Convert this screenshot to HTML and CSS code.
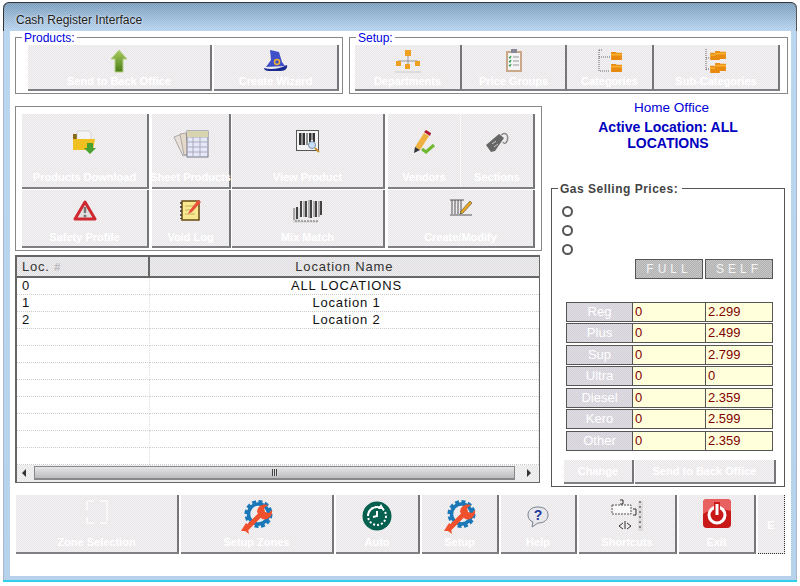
FILE: index.html
```html
<!DOCTYPE html>
<html lang="en">
<head>
    <meta charset="UTF-8">
    <meta name="viewport" content="width=device-width, initial-scale=1.0">
    <title>Cash Register Interface</title>
    <link rel="stylesheet" href="styles.css">
</head>
<body>
    <svg class="defs" width="0" height="0">
        <defs>
            <linearGradient id="arrow-fill" x1="0" y1="0" x2="0" y2="1">
                <stop offset="0" stop-color="#a8cc60"/>
                <stop offset="1" stop-color="#4a7c14"/>
            </linearGradient>
        </defs>
        <symbol id="wrench" viewBox="0 0 32 36">
            <circle cx="17.500" cy="15" r="12.500" fill="none" stroke="#1a78b8" stroke-width="3" stroke-dasharray="4 2.500"/>
            <circle cx="17.500" cy="15" r="10" fill="none" stroke="#1a78b8" stroke-width="3.500"/>
            <path fill="none" stroke="#f0502c" stroke-width="5" d="M5 30L20 15"/>
            <path fill="#f0502c" d="M16 13c0-5 5-9 11-7l-4 3 1 4 4 1 3-3c1 6-4 11-10 9z"/>
            <path fill="#f0502c" d="M0 32l5-8 4 4-2 2 1 5-4-3z"/>
        </symbol>
        <symbol id="folder" viewBox="0 0 12 10">
            <path fill="#e88a10" d="M0 1h5l1 1h6v8H0z"/>
            <path fill="#f8b030" d="M0 3h12v2H0z"/>
        </symbol>
    </svg>

    <div class="window">
        <div class="title">Cash Register Interface</div>
        <div class="client">

            <div class="top-row">
                <div class="group products">
                    <span class="legend">Products:</span>
                    <div class="btn-row products-row">
                        <div class="btn">
                            <svg width="18" height="24" viewBox="0 0 18 24"><path fill="url(#arrow-fill)" stroke="#b4d088" d="M9 1l8 9h-4v13H5V10H1z"/></svg>
                            <span class="label">Send to Back Office</span>
                        </div>
                        <div class="btn">
                            <svg width="24" height="24" viewBox="0 0 24 24"><path fill="#3f4fc8" d="M6 1l9 2 3 10 3 4-19 1 5-7z"/><path fill="#1a2a90" d="M0 19c7 2 15 1 23-3 1 3-2 6-6 6H5c-3 0-5-1-5-3z"/><circle cx="13" cy="13" r="2.500" fill="none" stroke="#f0b030" stroke-width="1.500"/></svg>
                            <span class="label">Create Wizard</span>
                        </div>
                    </div>
                </div>
                <div class="group setup">
                    <span class="legend">Setup:</span>
                    <div class="btn-row setup-row">
                        <div class="btn">
                            <svg width="26" height="24" viewBox="0 0 26 24"><path fill="none" stroke="#999" d="M13 6v6M3 16v-4h20v4M13 12v4"/><g fill="#f0a020"><rect x="10" y="1" width="6" height="6"/><rect x="1" y="12" width="5" height="5"/><rect x="10" y="15" width="5" height="5"/><rect x="20" y="12" width="5" height="5"/></g><path stroke="#ccc" d="M0 23h26"/></svg>
                            <span class="label">Departments</span>
                        </div>
                        <div class="btn">
                            <svg width="18" height="24" viewBox="0 0 18 24"><rect x="1" y="2" width="16" height="21" fill="#c8a888"/><rect x="3" y="4" width="12" height="17" fill="#f4f4f4"/><rect x="6" y="0" width="6" height="4" fill="#889"/><path fill="none" stroke="#30a050" stroke-width="1.200" d="M4 8l1 1 1-2M4 12l1 1 1-2M4 16l1 1 1-2"/><path stroke="#999" d="M8 8h6M8 12h6M8 16h6"/></svg>
                            <span class="label">Price Groups</span>
                        </div>
                        <div class="btn">
                            <svg width="24" height="24" viewBox="0 0 24 24"><path fill="none" stroke="#666" stroke-dasharray="1 1" d="M1 1v21h11M1 8h12M1 1h4"/><use href="#folder" x="13" y="2" width="11" height="9"/><use href="#folder" x="13" y="14" width="11" height="9"/></svg>
                            <span class="label">Categories</span>
                        </div>
                        <div class="btn">
                            <svg width="22" height="24" viewBox="0 0 22 24"><path fill="none" stroke="#666" stroke-dasharray="1 1" d="M1 0v22M1 9h4M1 20h4"/><use href="#folder" x="5" y="3" width="10" height="8"/><use href="#folder" x="10" y="1" width="11" height="9"/><use href="#folder" x="5" y="16" width="10" height="8"/><use href="#folder" x="10" y="13" width="11" height="9"/></svg>
                            <span class="label">Sub-Categories</span>
                        </div>
                    </div>
                </div>
            </div>

            <div class="main">
                <div class="left">
                    <div class="group actions">
                        <div class="btn tall mr3">
                            <svg width="24" height="24" viewBox="0 0 24 24"><path fill="#8a6a18" d="M0 4h6l2-2h8v18H0z"/><path fill="#f4f4f4" stroke="#bbb" stroke-width="0.500" d="M4 1h12l2 2v7H4z"/><path fill="#f0c020" d="M0 9h22l-2 11H0z"/><path fill="#48a030" d="M14 13h6v5h3l-6 6-6-6h3z"/></svg>
                            <span class="label">Products Download</span>
                        </div>
                        <div class="btn tall mr1">
                            <svg width="36" height="28" viewBox="0 0 36 28"><path fill="#e8e0d8" stroke="#aaa" d="M1 7l8-3 7 20-6 2z"/><path fill="#e4d8c8" stroke="#aaa" d="M7 4l6-1 3 21-5 1z"/><rect x="14" y="1" width="21" height="26" fill="#e4e8f8" stroke="#778"/><path stroke="#aab" d="M14 7h21M14 12h21M14 17h21M14 22h21M20 1v26M27 1v26"/><path fill="#d8d4b0" d="M14 1h21v6H14z"/></svg>
                            <span class="label">Sheet Products</span>
                        </div>
                        <div class="btn tall mr3">
                            <svg width="24" height="24" viewBox="0 0 24 24"><rect x="0.500" y="0.500" width="22" height="20" fill="#f4f4f4" stroke="#555"/><path stroke="#333" stroke-width="2" d="M4 3v12M8 3v12M14 3v9M18 3v9"/><path stroke="#333" d="M6 3v12M11 3v12M16 3v7"/><circle cx="16" cy="15" r="3.500" fill="#c8e0f8" stroke="#8090a8"/><path stroke="#c89030" stroke-width="2" d="M19 18l4 4"/></svg>
                            <span class="label">View Product</span>
                        </div>
                        <div class="btn pair">
                            <div class="btn tall half">
                                <svg width="24" height="26" viewBox="0 0 24 26"><path fill="#f0b040" d="M12 3l5 3-9 14-5-3z"/><path fill="#b01830" d="M12 2l2-2 5 3-1 3z"/><path fill="#333" d="M2 23l1-6 5 3z"/><path fill="none" stroke="#70b830" stroke-width="3" d="M10 19l4 3 8-7"/></svg>
                                <span class="label">Vendors</span>
                            </div>
                            <div class="btn tall half">
                                <svg width="24" height="24" viewBox="0 0 24 24"><path fill="#666" d="M1 15L14 4l5 4-9 13-4 1z"/><path fill="none" stroke="#888" stroke-width="1.500" d="M16 5c5-4 8 1 6 6-1 3-3 3-4 1"/><path stroke="#ccc" d="M7 14l4-3M9 17l4-3"/></svg>
                                <span class="label">Sections</span>
                            </div>
                        </div>
                        <div class="btn short mr3">
                            <svg width="24" height="22" viewBox="0 0 24 22"><path fill="#e0e0e0" stroke="#d02830" stroke-width="3" stroke-linejoin="round" d="M12 3l10 17H2z"/><path stroke="#777" stroke-width="2.500" d="M12 8v6"/><circle cx="12" cy="17" r="1.500" fill="#777"/></svg>
                            <span class="label">Safety Profile</span>
                        </div>
                        <div class="btn short mr1">
                            <svg width="22" height="22" viewBox="0 0 22 22"><rect x="2" y="2" width="17" height="19" fill="#f8e890" stroke="#6a4a10" stroke-width="1.500"/><path stroke="#333" stroke-width="1.500" stroke-dasharray="2 2" d="M1 3v17"/><path stroke="#c8b060" d="M5 7h10M5 11h8M5 15h10"/><path fill="#e8503c" d="M18 1l3 2-9 10-4 2 2-4z"/></svg>
                            <span class="label">Void Log</span>
                        </div>
                        <div class="btn short mr3">
                            <svg width="32" height="24" viewBox="0 0 32 24"><path fill="#ddd" d="M1 9h7v13h18v2H1z"/><path stroke="#444" stroke-width="2" d="M5 8v12M9 2v16M14 2v16M19 1v18M24 2v16M29 2v14"/><path stroke="#777" d="M2 9v12M12 2v16M17 1v18M22 2v16M27 2v16"/><path stroke="#666" stroke-dasharray="2 1" d="M3 22h24"/></svg>
                            <span class="label">Mix Match</span>
                        </div>
                        <div class="btn short">
                            <svg width="22" height="18" viewBox="0 0 22 18"><path stroke="#555" d="M0 1h14M2 1v14M5 1v14M8 1v14M11 1v14M0 16h22"/><path fill="#e8a820" stroke="#333" stroke-width="0.500" d="M20 2l2 2-9 10-3 1 1-3z"/></svg>
                            <span class="label">Create/Modify</span>
                        </div>
                    </div>

                    <div class="grid-box">
                        <table class="loc-table">
                            <thead>
                                <tr><th class="col-id">Loc. <span class="hash">#</span></th><th>Location Name</th></tr>
                            </thead>
                            <tbody>
                                <tr><td>0</td><td class="name">ALL LOCATIONS</td></tr>
                                <tr><td>1</td><td class="name">Location 1</td></tr>
                                <tr><td>2</td><td class="name">Location 2</td></tr>
                                <tr><td></td><td></td></tr>
                                <tr><td></td><td></td></tr>
                                <tr><td></td><td></td></tr>
                                <tr><td></td><td></td></tr>
                                <tr><td></td><td></td></tr>
                                <tr><td></td><td></td></tr>
                                <tr><td></td><td></td></tr>
                                <tr><td></td><td></td></tr>
                            </tbody>
                        </table>
                        <div class="hscroll">
                            <span class="arrow arrow-left"></span>
                            <div class="thumb"><span class="grip"></span></div>
                            <span class="arrow arrow-right"></span>
                        </div>
                    </div>
                </div>

                <div class="right">
                    <div class="status">
                        <div class="office">Home Office</div>
                        <div class="active">Active Location: ALL LOCATIONS</div>
                    </div>
                    <div class="gas">
                        <span class="gas-legend">Gas Selling Prices:</span>
                        <div class="radios">
                            <span class="radio"></span>
                            <span class="radio"></span>
                            <span class="radio"></span>
                        </div>
                        <div class="modes">
                            <div class="mode">FULL</div>
                            <div class="mode">SELF</div>
                        </div>
                        <div class="prices">
                            <div class="price"><div class="grade">Reg</div><div class="val">0</div><div class="val">2.299</div></div>
                            <div class="price"><div class="grade">Plus</div><div class="val">0</div><div class="val">2.499</div></div>
                            <div class="price"><div class="grade">Sup</div><div class="val">0</div><div class="val">2.799</div></div>
                            <div class="price"><div class="grade">Ultra</div><div class="val">0</div><div class="val">0</div></div>
                            <div class="price"><div class="grade">Diesel</div><div class="val">0</div><div class="val">2.359</div></div>
                            <div class="price"><div class="grade">Kero</div><div class="val">0</div><div class="val">2.599</div></div>
                            <div class="price"><div class="grade">Other</div><div class="val">0</div><div class="val">2.359</div></div>
                        </div>
                        <div class="gas-actions">
                            <div class="btn plain"><span class="label">Change</span></div>
                            <div class="btn plain"><span class="label">Send to Back Office</span></div>
                        </div>
                    </div>
                </div>
            </div>

            <div class="bottom-row">
                <div class="btn">
                    <svg width="26" height="28" viewBox="0 0 26 28"><path fill="none" stroke="#f8f8f8" stroke-width="2" d="M3 2h7M16 2h7M3 2v10M23 2v20M3 18v6h7M16 24h7"/></svg>
                    <span class="label">Zone Selection</span>
                </div>
                <div class="btn">
                    <svg width="32" height="36"><use href="#wrench"/></svg>
                    <span class="label">Setup Zones</span>
                </div>
                <div class="btn">
                    <svg class="clock" width="30" height="30" viewBox="0 0 30 30"><circle cx="15" cy="15" r="14.500" fill="#05604f"/><circle cx="15" cy="15" r="9" fill="none" stroke="#fff" stroke-width="2" stroke-dasharray="2 2"/><path fill="none" stroke="#fff" stroke-width="2" d="M6 15a9 9 0 0 1 13-8"/><path fill="none" stroke="#fff" stroke-width="2" d="M15 10v5l-4 1"/><path fill="#fff" d="M19 3l3 5-6 0z"/></svg>
                    <span class="label">Auto</span>
                </div>
                <div class="btn">
                    <svg width="32" height="36"><use href="#wrench"/></svg>
                    <span class="label">Setup</span>
                </div>
                <div class="btn">
                    <svg class="help" width="22" height="22" viewBox="0 0 22 22"><path fill="#e8e8ec" stroke="#7a8290" d="M11 1c6 0 10 3 10 8s-4 8-10 8l-6 4 1-5c-3-1-5-4-5-7 0-5 4-8 10-8z"/><text class="qmark" x="11" y="14" text-anchor="middle">?</text></svg>
                    <span class="label">Help</span>
                </div>
                <div class="btn">
                    <svg width="32" height="32" viewBox="0 0 32 32"><path fill="#f8f8f8" stroke="#555" stroke-dasharray="2 1" d="M1 6h19v9H1z"/><path fill="#ddd" d="M27 2h5v30h-5z"/><path stroke="#333" stroke-dasharray="2 3" d="M29 2v30"/><path fill="none" stroke="#333" d="M9 1h3v4h-3M22 10h3v6h-3M12 24l-4 3 4 3M16 24l4 3-4 3M14 22v8"/></svg>
                    <span class="label">Shortcuts</span>
                </div>
                <div class="btn">
                    <svg width="28" height="29" viewBox="0 0 28 29"><rect width="28" height="29" rx="4" fill="#c81818"/><path fill="#e86060" d="M0 4a4 4 0 0 1 4-4h20a4 4 0 0 1 4 4v8c-10-3-18-3-28 3z"/><circle cx="14" cy="16" r="8" fill="none" stroke="#fff" stroke-width="3"/><path stroke="#c81818" stroke-width="6" d="M14 3v12"/><path stroke="#fff" stroke-width="3" d="M14 5v11"/></svg>
                    <span class="label">Exit</span>
                </div>
                <div class="btn tail"><span class="label tail-label">E</span></div>
            </div>
        </div>
    </div>
</body>
</html>
```

FILE: styles.css
```css
html, body {
    margin: 0;
    padding: 0;
    background: #fff;
}
body {
    font-family: "Liberation Sans", Arial, sans-serif;
    font-size: 12px;
    width: 800px;
    height: 586px;
    overflow: hidden;
}
.defs {
    position: absolute;
}

/* window frame */
.window {
    margin: 2px 3px 0 3px;
    width: 794px;
    height: 580px;
    box-sizing: border-box;
    padding: 0 6px 6px 7px;
    border-top: 1px solid #333;
    border-radius: 6px 6px 0 0;
    border-bottom: 2px solid #30d0e8;
    background-color: #b8d4f0;
    background-image:
        repeating-conic-gradient(rgba(255, 255, 255, 0.1) 0 25%, rgba(0, 0, 0, 0.04) 0 50%),
        linear-gradient(#7ea2c2, #bcd8f4 28px, #b8d4f0);
    background-size: 2px 2px, 100% 100%;
    box-shadow: inset 1px 0 0 #a8b8cc, inset -1px 0 0 #a8b8cc;
}
.title {
    height: 28px;
    margin: 0 -6px 0 -7px;
    padding: 10px 0 0 12px;
    box-sizing: border-box;
    border-left: 1px solid #333;
    border-right: 1px solid #555;
    border-radius: 6px 6px 0 0;
    color: #222;
    font-size: 12px;
    line-height: 14px;
    text-shadow: 0 0 3px #fff;
}
.client {
    height: 545px;
    box-sizing: border-box;
    background: #fff;
    padding: 6px 0 0 5px;
}

/* groups */
.group {
    position: relative;
    box-sizing: border-box;
    border: 1px solid #888;
    background: #fff;
}
.legend {
    position: absolute;
    top: -7px;
    left: 6px;
    padding: 0 2px;
    background: #fff;
    color: #0000e0;
    font-size: 12px;
    line-height: 14px;
}
.top-row {
    display: flex;
    gap: 6px;
}
.products {
    width: 328px;
    height: 57px;
    padding: 7px 0 0 12px;
}
.setup {
    width: 439px;
    height: 57px;
    padding: 7px 0 0 5px;
}
.btn-row {
    display: grid;
    height: 46px;
}
.products-row {
    grid-template-columns: 184px 125px;
    gap: 2px;
}
.setup-row {
    grid-template-columns: 107px 105px 87px 126px;
    gap: 0;
}

/* dithered button */
.btn {
    display: flex;
    flex-direction: column;
    align-items: center;
    box-sizing: border-box;
    padding-top: 4px;
    border-right: 2px solid #76767a;
    border-bottom: 2px solid #808084;
    background-color: #eeecef;
    background-image: repeating-conic-gradient(#e6e6e6 0 25%, #f6f2f6 0 50%);
    background-size: 2px 2px;
    min-width: 0;
}
.btn svg {
    flex: none;
}
.label {
    margin-top: auto;
    padding-bottom: 1px;
    color: #fff;
    font-size: 11px;
    font-weight: bold;
    line-height: 14px;
    white-space: nowrap;
}

/* middle action block */
.main {
    display: flex;
}
.left {
    width: 527px;
    padding-top: 12px;
}
.actions {
    display: grid;
    grid-template-columns: 130px 80px 156px 147px;
    grid-template-rows: 75px 58px;
    row-gap: 1px;
    height: 145px;
    padding: 7px 0 0 6px;
}
.mr3 {
    margin-right: 3px;
}
.mr1 {
    margin-right: 1px;
}
.tall {
    padding-top: 16px;
    padding-bottom: 2px;
}
.short {
    padding-top: 9px;
    padding-bottom: 1px;
}
.pair {
    flex-direction: row;
    align-items: stretch;
    padding: 0;
}
.half {
    flex: 1;
    border: 0;
    background: none;
}
.half + .half {
    border-left: 1px solid #f8f8f8;
}

/* location table */
.grid-box {
    box-sizing: border-box;
    width: 525px;
    height: 228px;
    margin-top: 4px;
    border: 2px solid #666;
    border-right-width: 1px;
    background: #fff;
}
.loc-table {
    width: 100%;
    border-collapse: collapse;
    table-layout: fixed;
    font-size: 13px;
    letter-spacing: 0.8px;
    color: #111;
}
.loc-table th {
    height: 20px;
    padding: 0;
    box-sizing: border-box;
    font-weight: normal;
    border-bottom: 2px solid #666;
    background-color: #e8e6ea;
    background-image: repeating-conic-gradient(#dcdddd 0 25%, #f2edf2 0 50%);
    background-size: 2px 2px;
    color: #333;
}
.col-id {
    width: 132px;
    text-align: left;
    text-indent: 5px;
    border-right: 2px solid #666;
}
.hash {
    color: #aaa;
    font-size: 11px;
}
.loc-table td {
    height: 17px;
    padding: 0 0 0 5px;
    box-sizing: border-box;
    line-height: 15px;
    border-bottom: 1px dotted #ccc;
    border-right: 1px dotted #ddd;
}
.loc-table td.name {
    text-align: center;
    border-right: 0;
}
.hscroll {
    display: flex;
    align-items: center;
    height: 17px;
    background-color: #ecebee;
    background-image: repeating-conic-gradient(#e4e4e4 0 25%, #f6f4f6 0 50%);
    background-size: 2px 2px;
}
.arrow {
    flex: none;
    width: 0;
    height: 0;
    border-top: 4px solid transparent;
    border-bottom: 4px solid transparent;
}
.arrow-left {
    margin: 0 8px 0 5px;
    border-right: 4px solid #333;
}
.arrow-right {
    margin: 0 8px 0 12px;
    border-left: 4px solid #333;
}
.thumb {
    flex: 1;
    display: flex;
    align-items: center;
    justify-content: center;
    height: 14px;
    box-sizing: border-box;
    border: 1px solid #888;
    border-bottom-width: 2px;
    background: linear-gradient(#e6e6e8, #bcbcc0);
}
.grip {
    width: 6px;
    height: 7px;
    background: repeating-linear-gradient(90deg, #444 0 1px, #ddd 1px 2px);
}

/* right column */
.right {
    width: 234px;
    margin-left: 9px;
}
.status {
    height: 94px;
    box-sizing: border-box;
    padding-top: 6px;
    text-align: center;
    color: #0000d8;
}
.office {
    font-size: 13.500px;
    line-height: 16px;
    padding-left: 7px;
}
.active {
    width: 170px;
    margin: 3px auto 0;
    color: #0000c0;
    font-size: 14px;
    font-weight: bold;
    line-height: 16px;
}
.gas {
    position: relative;
    box-sizing: border-box;
    height: 299px;
    border: 1px solid #555;
    padding: 17px 11px 0 12px;
}
.gas-legend {
    position: absolute;
    top: -7px;
    left: 6px;
    padding: 0 4px 0 2px;
    background: #fff;
    color: #444;
    font-size: 12px;
    font-weight: bold;
    letter-spacing: 0.5px;
    line-height: 14px;
}
.radios {
    display: flex;
    flex-direction: column;
    gap: 8px;
    margin-left: -2px;
}
.radio {
    width: 11px;
    height: 11px;
    box-sizing: border-box;
    border: 2px solid #555;
    border-radius: 50%;
}
.modes {
    display: flex;
    justify-content: flex-end;
    gap: 2px;
    margin-top: 4px;
}
.mode {
    width: 68px;
    height: 20px;
    box-sizing: border-box;
    border: 1px solid #555;
    background-color: #bbb;
    background-image: repeating-conic-gradient(#b0b0b0 0 25%, #c8c8c8 0 50%);
    background-size: 2px 2px;
    color: #f4f4f4;
    font-size: 12px;
    line-height: 18px;
    letter-spacing: 4px;
    text-align: center;
}
.prices {
    margin: 23px 0 0 2px;
}
.price {
    display: grid;
    grid-template-columns: 67px 73px 67px;
    height: 20px;
    margin-bottom: 1px;
}
.price:nth-child(even) {
    margin-bottom: 2px;
}
.grade {
    box-sizing: border-box;
    border: 1px solid #555;
    background-color: #d8d8e0;
    background-image: repeating-conic-gradient(#d0d2d8 0 25%, #e4dce4 0 50%);
    background-size: 2px 2px;
    color: #fff;
    font-size: 13px;
    line-height: 18px;
    text-align: center;
}
.val {
    box-sizing: border-box;
    border: 1px solid #555;
    border-left: 0;
    padding-left: 2px;
    background: #ffffdc;
    color: #800000;
    font-size: 13px;
    line-height: 18px;
}
.gas-actions {
    display: grid;
    grid-template-columns: 70px 141px;
    gap: 1px;
    height: 24px;
    margin-top: 9px;
}
.plain {
    padding: 0;
    justify-content: center;
}
.plain .label {
    margin: 0;
}

/* bottom buttons */
.bottom-row {
    display: grid;
    grid-template-columns: 163px 153px 84px 77px 76px 98px 77px 27px;
    gap: 2px;
    height: 58px;
    margin: 8px 0 0 1px;
}
.bottom-row .btn {
    padding-top: 4px;
    padding-bottom: 2px;
}
.bottom-row .clock {
    margin-top: 2px;
}
.bottom-row .help {
    margin-top: 7px;
}
.tail {
    border: 1px dotted #333;
    border-width: 0 1px 1px 0;
}
.tail-label {
    margin: auto 0;
}
.qmark {
    fill: #2438a0;
    font-size: 14px;
    font-weight: bold;
    font-family: "Liberation Sans", Arial, sans-serif;
}
```
